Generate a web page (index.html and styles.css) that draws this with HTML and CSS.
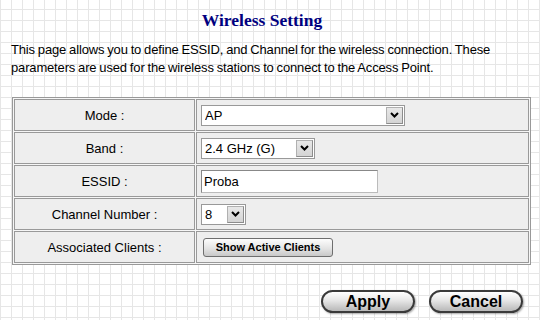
FILE: index.html
```html
<!DOCTYPE html>
<html lang="en">
<head>
  <meta charset="UTF-8" />
  <title>Wireless Setting</title>
  <link rel="stylesheet" href="styles.css">
</head>
<body>
  <div class="page">
    <h1 class="title">Wireless Setting</h1>
    <p class="intro">This page allows you to define ESSID, and Channel for the wireless connection. These parameters are used for the wireless stations to connect to the Access Point.</p>

    <table class="settings">
      <tr>
        <td class="label">Mode :</td>
        <td class="field">
          <div class="select wide">
            <select><option>AP</option></select>
            <span class="arrow"><svg width="9" height="6" viewBox="0 0 9 6"><path d="M1 1 L4.5 4.5 L8 1" fill="none" stroke="#000" stroke-width="2"/></svg></span>
          </div>
        </td>
      </tr>
      <tr>
        <td class="label">Band :</td>
        <td class="field">
          <div class="select band">
            <select><option>2.4 GHz (G)</option></select>
            <span class="arrow"><svg width="9" height="6" viewBox="0 0 9 6"><path d="M1 1 L4.5 4.5 L8 1" fill="none" stroke="#000" stroke-width="2"/></svg></span>
          </div>
        </td>
      </tr>
      <tr>
        <td class="label">ESSID :</td>
        <td class="field"><input class="text" type="text" value="Proba"></td>
      </tr>
      <tr>
        <td class="label">Channel Number :</td>
        <td class="field">
          <div class="select channel">
            <select><option>8</option></select>
            <span class="arrow"><svg width="9" height="6" viewBox="0 0 9 6"><path d="M1 1 L4.5 4.5 L8 1" fill="none" stroke="#000" stroke-width="2"/></svg></span>
          </div>
        </td>
      </tr>
      <tr>
        <td class="label">Associated Clients :</td>
        <td class="field"><button class="small-btn">Show Active Clients</button></td>
      </tr>
    </table>

    <div class="actions">
      <button class="pill">Apply</button>
      <button class="pill">Cancel</button>
    </div>
  </div>
</body>
</html>
```

FILE: styles.css
```css
* {
  box-sizing: border-box;
}

body {
  margin: 0;
  font-family: "Liberation Sans", Arial, sans-serif;
  font-size: 13px;
  color: #000;
  background-color: #fff;
  background-image:
    linear-gradient(to right, #e6e6e6 1px, transparent 1px),
    linear-gradient(to bottom, #e6e6e6 1px, transparent 1px);
  background-size: 11px 11px;
  background-position: 0 9px;
  min-height: 320px;
}

.page {
  padding: 10px 0 0 0;
}

.title {
  margin: 0;
  padding-right: 16px;
  text-align: center;
  font-family: "Liberation Serif", "Times New Roman", serif;
  font-size: 17.5px;
  line-height: 20px;
  font-weight: bold;
  color: #000080;
}

.intro {
  margin: 11px 0 0 0;
  padding: 0 36px 0 11px;
  line-height: 18px;
  letter-spacing: -0.16px;
  word-spacing: -0.5px;
}

.settings {
  margin: 20px 0 0 12px;
  width: 519px;
  border: 1px solid #999;
  border-spacing: 1px;
  background: #f6f6f6;
}

.settings td {
  border: 1px solid #999;
  background: #eee;
  height: 32px;
  padding: 0;
}

.label {
  width: 181px;
  text-align: center;
}

.field {
  padding-left: 4px !important;
}

.select {
  display: flex;
  align-items: center;
  height: 21px;
  border: 1px solid #999;
  background: #fff;
}

.select select {
  flex: 1;
  min-width: 0;
  height: 19px;
  border: 0;
  padding: 0 0 0 3px;
  background: transparent;
  appearance: none;
  font: inherit;
  font-size: 13px;
  color: #000;
  outline: none;
}

.select.wide { width: 204px; }
.select.band { width: 114px; }
.select.channel { width: 45px; }

.arrow {
  width: 17px;
  height: 17px;
  margin-right: 1px;
  display: flex;
  align-items: center;
  justify-content: center;
  background: linear-gradient(#e8e8e8, #d4d4d4);
  border: 1px solid #b0b0b0;
  border-right-color: #8c8c8c;
  border-bottom-color: #8c8c8c;
}

.text {
  width: 177px;
  height: 23px;
  border: 1px solid #888;
  border-right-color: #bbb;
  border-bottom-color: #bbb;
  padding: 0 2px;
  font: inherit;
  font-size: 13px;
  background: #fff;
}

.small-btn {
  margin-left: 2px;
  width: 130px;
  height: 19px;
  padding: 0;
  border: 1px solid #6e6e6e;
  border-radius: 3px;
  background: linear-gradient(#fdfdfd, #e4e4e4 55%, #c8c8c8);
  font-family: "Liberation Sans", Arial, sans-serif;
  font-size: 11px;
  font-weight: bold;
  color: #000;
}

.actions {
  display: flex;
  justify-content: flex-end;
  gap: 14px;
  margin-top: 25px;
  padding-right: 17px;
}

.pill {
  width: 94px;
  height: 23px;
  padding: 0;
  border: 2px solid #3a3a3a;
  border-radius: 12px;
  background: linear-gradient(#ffffff, #e6e6e6 45%, #b8b8b8);
  box-shadow: 1px 1px 2px rgba(0, 0, 0, 0.35);
  font-family: "Liberation Sans", Arial, sans-serif;
  font-size: 16px;
  font-weight: bold;
  color: #000;
}
```
